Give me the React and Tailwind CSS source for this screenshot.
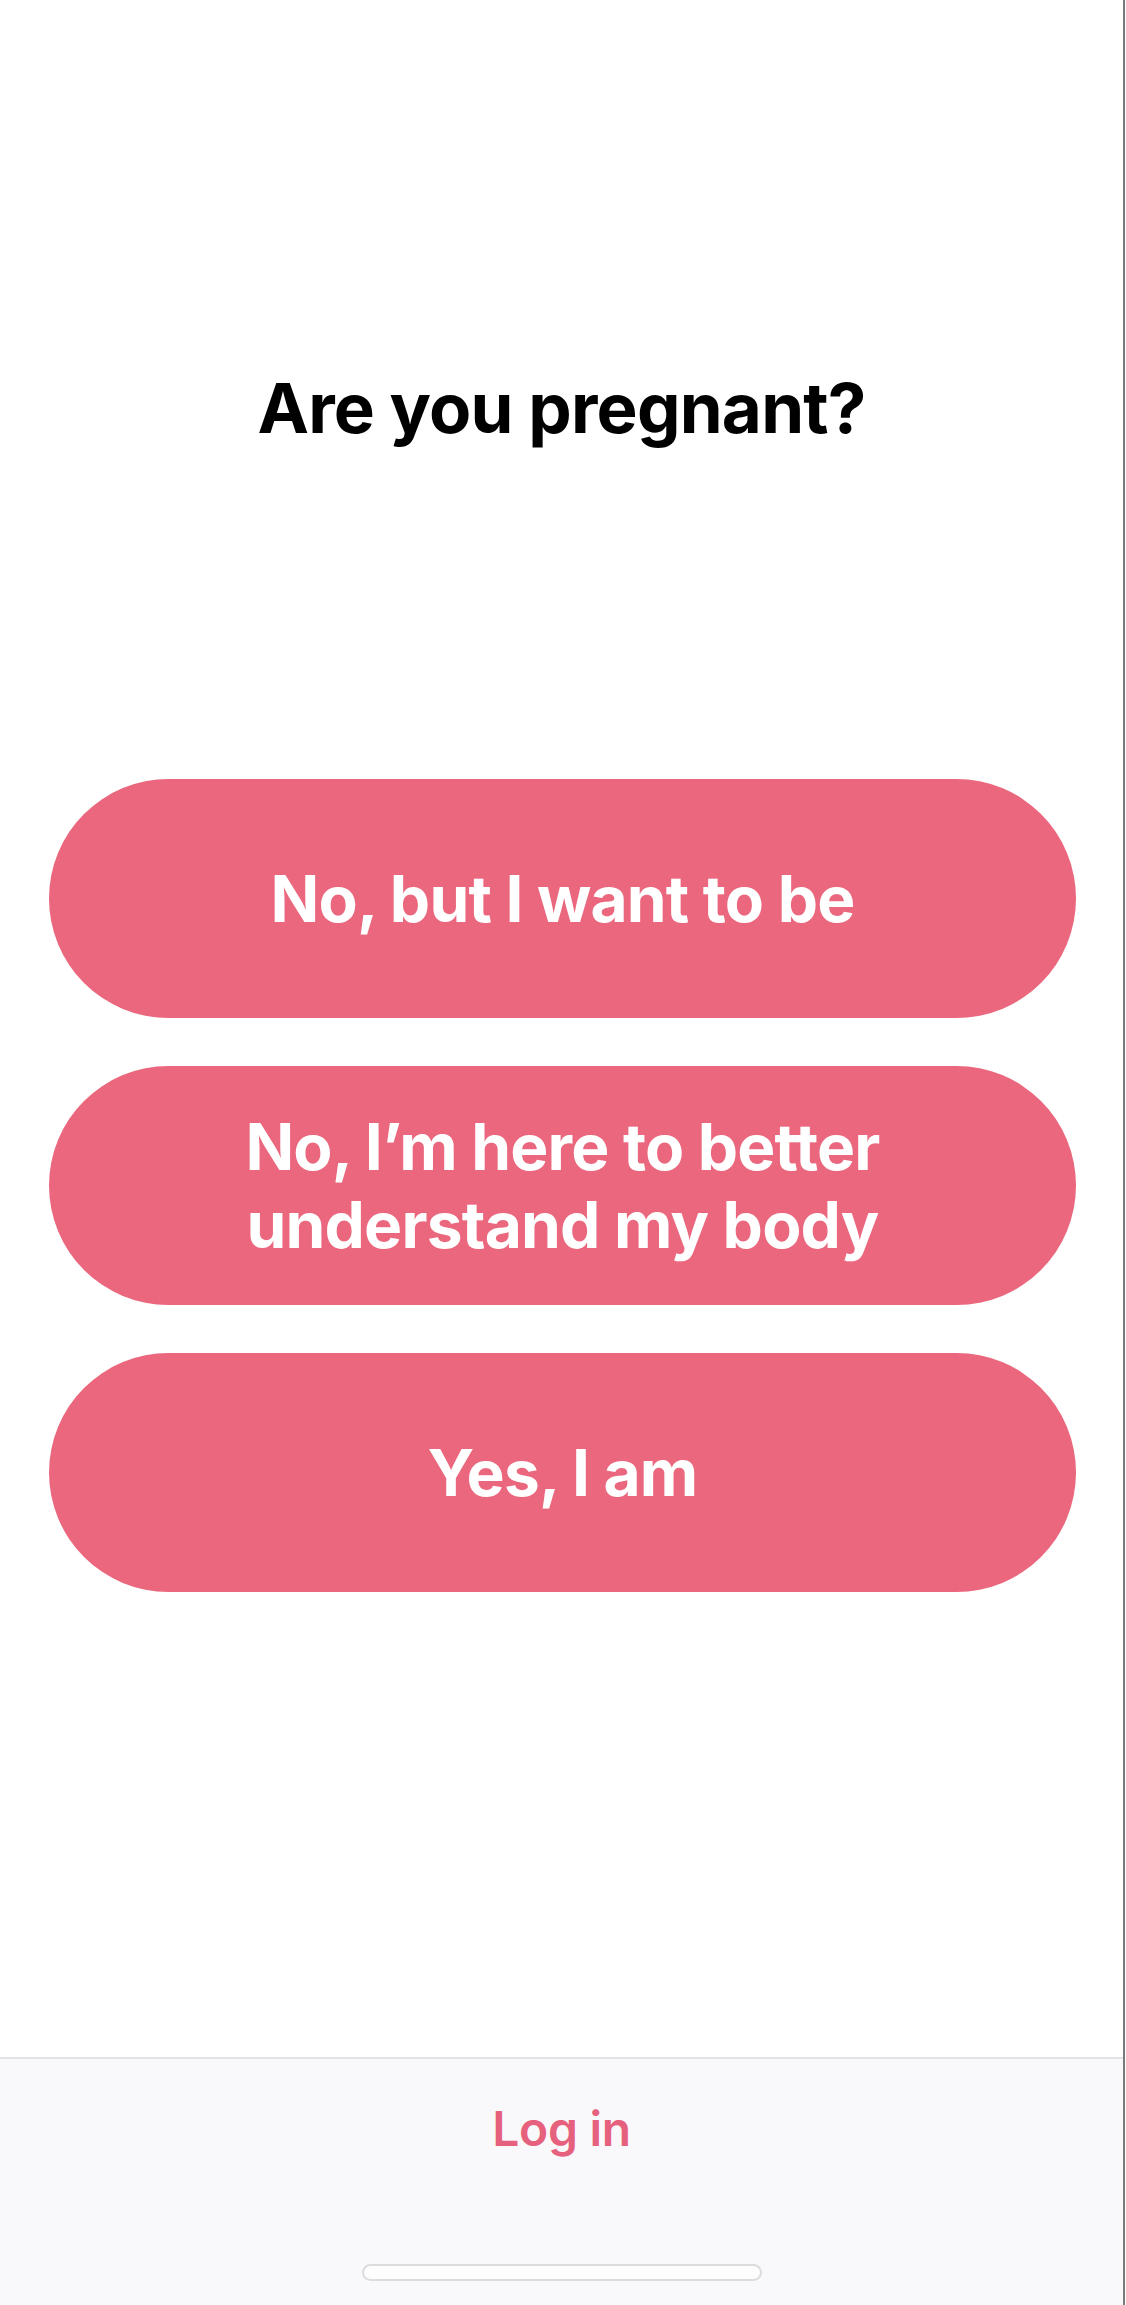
const options = ['No, but I want to be', 'No, I\u2019m here to better understand my body', 'Yes, I am'];

export default function App() {
  return (
    <div className="flex w-full bg-white">
      <div
        className="mr-[1px] flex min-h-[2305px] w-[1125px] flex-col border-r-2 border-[#7a7a7a] bg-white"
        style={{ fontFamily: 'Inter, "Noto Sans", sans-serif' }}
      >
        <main className="flex flex-1 flex-col">
          <h1 className="pt-[368px] text-center text-[69px] font-bold leading-[80px] tracking-[-0.8px] text-black">
            Are you pregnant?
          </h1>

          <div className="mt-[331px] flex flex-col gap-[48px] pl-[49px] pr-[47px]">
            {options.map((label) => (
              <button
                key={label}
                className="flex h-[239px] w-full items-center justify-center rounded-full bg-[#ea677e] px-[140px] text-center text-[64px] font-bold leading-[78px] tracking-[-0.8px] text-white"
              >
                {label}
              </button>
            ))}
          </div>
        </main>

        <footer className="flex flex-col items-center border-t-2 border-[#e3e3e6] bg-[#f9f9fb] pt-[40px] pb-[24px]">
          <button className="text-[48px] font-semibold leading-[60px] tracking-[-0.3px] text-[#e6617d]">Log in</button>
          <div className="mt-[105px] h-[17px] w-[400px] rounded-full border-2 border-[#dcdcdf] bg-[#fdfdfd]"></div>
        </footer>
      </div>
    </div>
  );
}
